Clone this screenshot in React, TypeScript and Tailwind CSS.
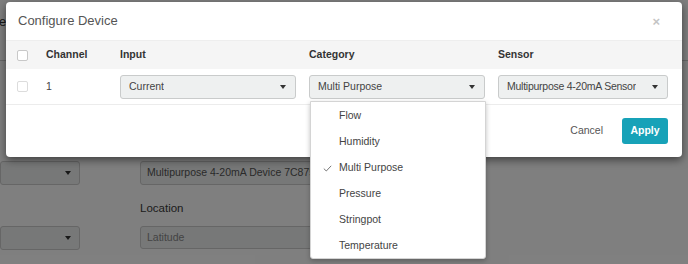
import React from "react";

const CATEGORIES = ["Flow", "Humidity", "Multi Purpose", "Pressure", "Stringpot", "Temperature"];

function Caret() {
  return (
    <span className="shrink-0 w-0 h-0 border-l-[3.5px] border-r-[3.5px] border-t-[4px] border-l-transparent border-r-transparent border-t-[#333]" />
  );
}

function Select({ value, width, tight }: { value: string; width: string; tight?: boolean }) {
  return (
    <div
      className={`${width} h-[24px] rounded-[3px] border border-[#c9cbcb] bg-[#eef0f0] flex items-center justify-between pl-[8px] pr-[9px] text-[10.5px] text-[#444]`}
    >
      <span className={`truncate ${tight ? "tracking-[-0.25px]" : ""}`}>{value}</span>
      <Caret />
    </div>
  );
}

function Checkbox({ light }: { light?: boolean }) {
  return (
    <span
      className={`block w-[11px] h-[11px] rounded-[2px] bg-white border ${
        light ? "border-[#dcdcdc]" : "border-[#c8c8c8]"
      }`}
    />
  );
}

export default function App() {
  return (
    <div className="relative w-[688px] h-[264px] overflow-hidden bg-white text-[#333] font-['Liberation_Sans',Arial,sans-serif]">
      {/* page behind the modal */}
      <div className="flex flex-col">
        <div className="h-[61px] border-b border-[#d0d0d0] flex flex-col">
          <div className="h-[38px] flex items-center text-[13px] -ml-[1px] pt-[6px]">e</div>
        </div>
        <div className="flex mt-[100px]">
          <div className="w-[80px] flex flex-col gap-[41px]">
            <div className="h-[24px] rounded-[3px] border border-[#ccc] bg-[#eef0f0] flex items-center justify-end pr-[8px]">
              <Caret />
            </div>
            <div className="h-[24px] rounded-[3px] border border-[#ccc] bg-[#eef0f0] flex items-center justify-end pr-[8px]">
              <Caret />
            </div>
          </div>
          <div className="ml-[60px] w-[200px] flex flex-col">
            <div className="h-[24px] rounded-[3px] border border-[#ccc] bg-[#eef0f0] flex items-center pl-[6px] text-[10.5px] text-[#555] whitespace-nowrap overflow-hidden">
              Multipurpose 4-20mA Device 7C875F
            </div>
            <div className="h-[41px] flex items-end pb-[9px] text-[11.5px] text-[#3a3a3a]">Location</div>
            <div className="h-[23px] rounded-[3px] border border-[#ccc] bg-[#eef0f0] flex items-center pl-[6px] text-[10.5px] text-[#888]">
              Latitude
            </div>
          </div>
        </div>
      </div>

      {/* backdrop */}
      <div className="absolute inset-0 bg-black/50" />

      {/* modal */}
      <div className="absolute left-[6px] top-[2px] w-[676px] bg-white rounded-[4px] shadow-[0_3px_9px_rgba(0,0,0,0.5)] flex flex-col">
        <div className="h-[38px] flex items-center justify-between pl-[12px] pr-[22px]">
          <span className="text-[13px] text-[#555]">Configure Device</span>
          <span className="text-[13px] font-bold text-[#c4c4c4] leading-none">×</span>
        </div>

        <div className="h-[29px] bg-[#f5f5f5] border-t border-[#eee] flex items-center text-[10.5px] font-bold text-[#333]">
          <div className="w-[40px] pl-[11px]">
            <Checkbox />
          </div>
          <div className="w-[74px]">Channel</div>
          <div className="w-[189px]">Input</div>
          <div className="w-[189px]">Category</div>
          <div>Sensor</div>
        </div>

        <div className="h-[36px] border-b border-[#ececec] flex items-center text-[10.5px] text-[#444]">
          <div className="w-[40px] pl-[11px]">
            <Checkbox light />
          </div>
          <div className="w-[74px]">1</div>
          <div className="w-[189px]">
            <Select value="Current" width="w-[176px]" />
          </div>
          <div className="w-[189px]">
            <Select value="Multi Purpose" width="w-[176px]" />
          </div>
          <div>
            <Select value="Multipurpose 4-20mA Sensor" width="w-[170px]" tight />
          </div>
        </div>

        <div className="h-[52px] flex items-center justify-end pr-[14px] gap-[19px]">
          <span className="text-[10.5px] text-[#555]">Cancel</span>
          <button className="w-[46px] h-[26px] rounded-[3px] bg-[#17a2b8] text-white text-[10.5px] font-bold">
            Apply
          </button>
        </div>
      </div>

      {/* open category menu */}
      <div className="absolute left-[310px] top-[101px] w-[176px] h-[158px] bg-white border border-[#d4d4d4] rounded-b-[3px] shadow-[0_2px_5px_rgba(0,0,0,0.25)] py-[1px]">
        {CATEGORIES.map((c) => (
          <div key={c} className="relative h-[26px] flex items-center pl-[28px] text-[10.5px] text-[#444]">
            {c === "Multi Purpose" && (
              <svg className="absolute left-[12px] top-[10px]" width="9" height="7" viewBox="0 0 9 7" fill="none">
                <path d="M0.8 3.6 L3.3 6 L8.2 0.8" stroke="#777" strokeWidth="1" />
              </svg>
            )}
            {c}
          </div>
        ))}
      </div>
    </div>
  );
}
